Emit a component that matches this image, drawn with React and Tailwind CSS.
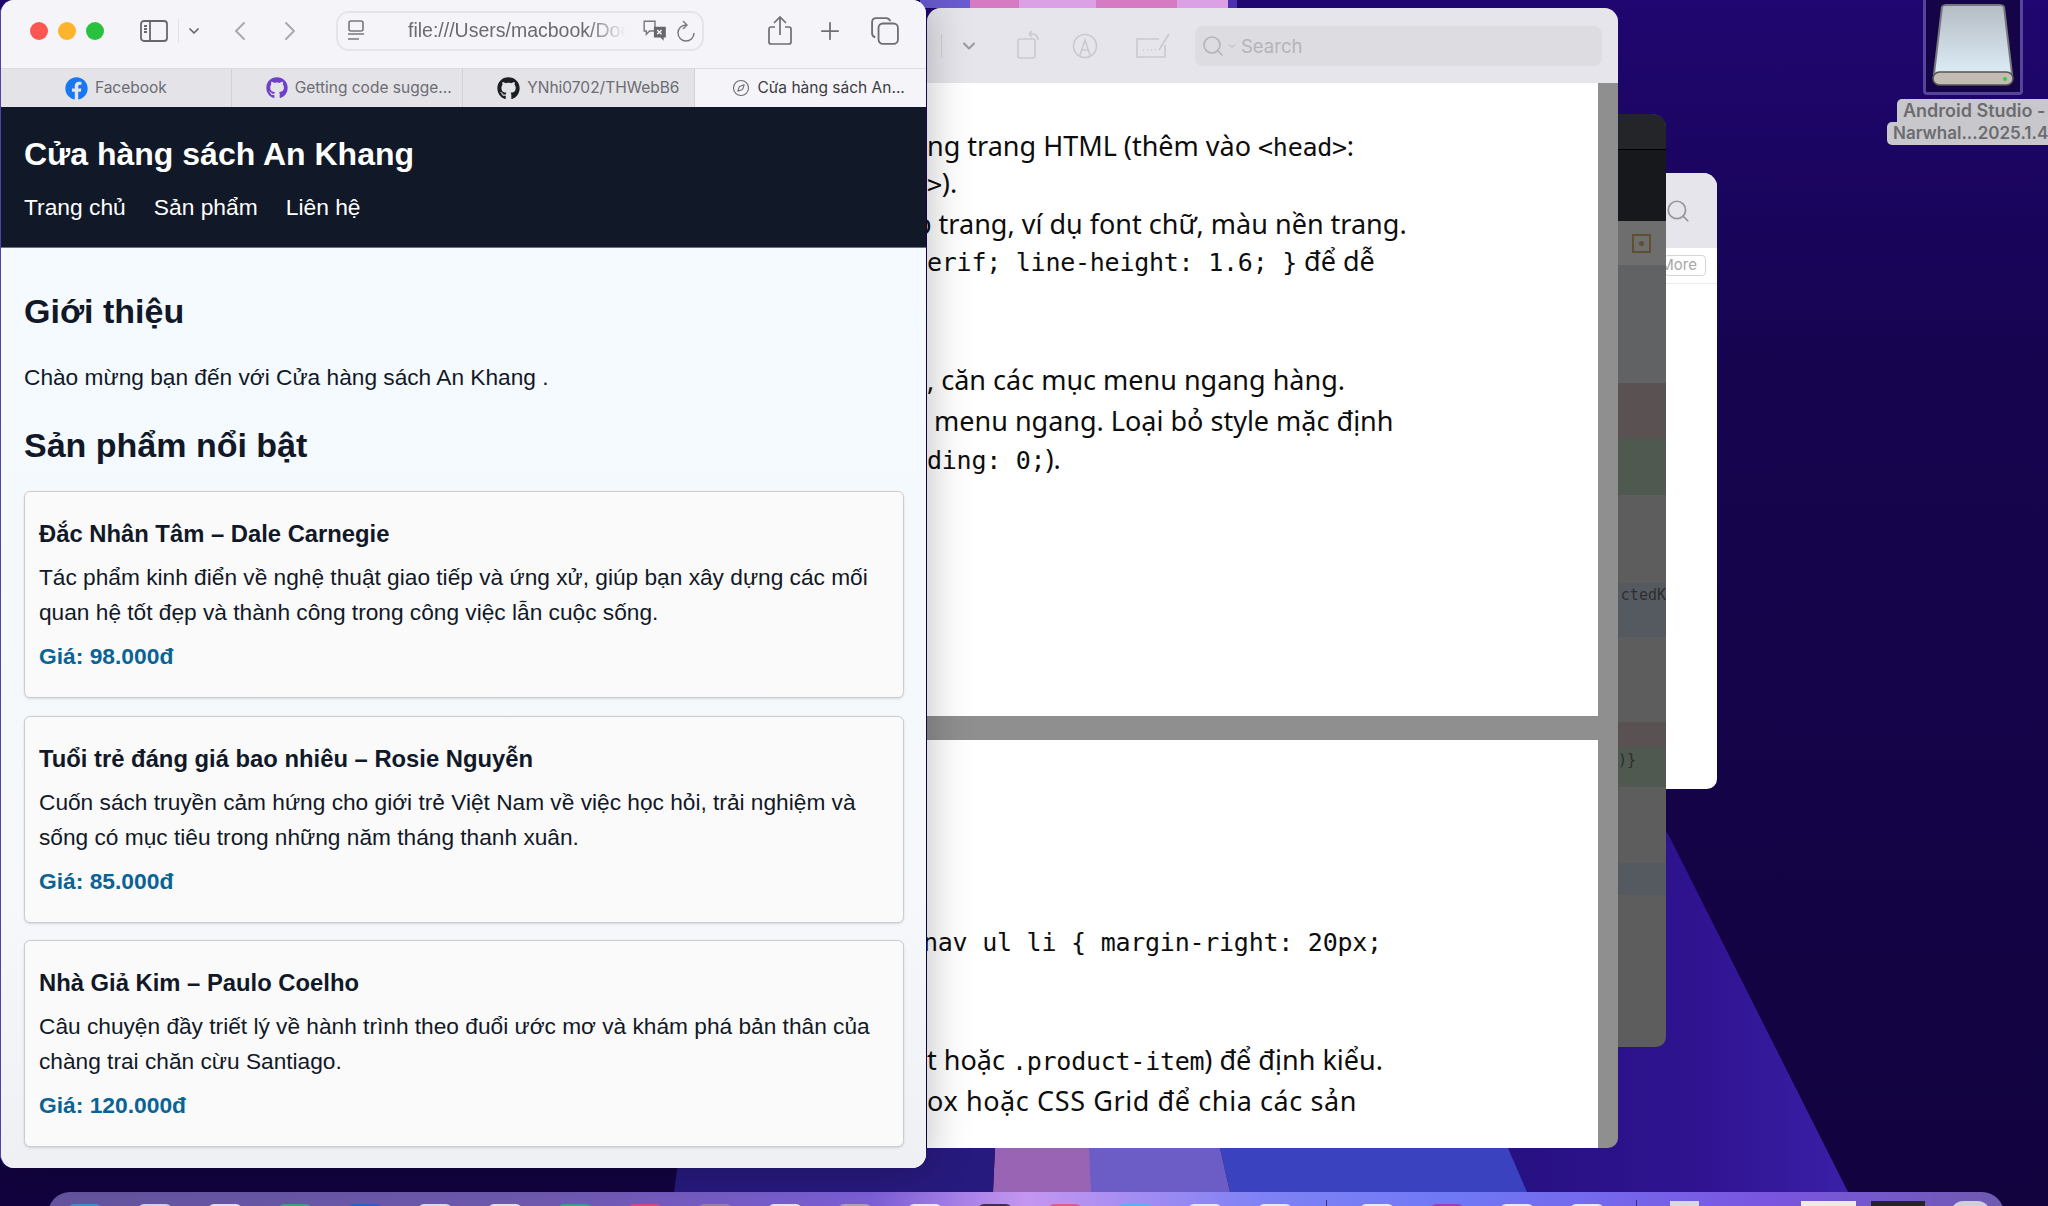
import { Compass, ChevronDown, ChevronLeft, ChevronRight, Plus, Search } from "lucide-react";
import { FaFacebook, FaGithub } from "react-icons/fa";

const books = [
    {
        title: "Đắc Nhân Tâm – Dale Carnegie",
        desc: "Tác phẩm kinh điển về nghệ thuật giao tiếp và ứng xử, giúp bạn xây dựng các mối quan hệ tốt đẹp và thành công trong công việc lẫn cuộc sống.",
        price: "Giá: 98.000đ",
    },
    {
        title: "Tuổi trẻ đáng giá bao nhiêu – Rosie Nguyễn",
        desc: "Cuốn sách truyền cảm hứng cho giới trẻ Việt Nam về việc học hỏi, trải nghiệm và sống có mục tiêu trong những năm tháng thanh xuân.",
        price: "Giá: 85.000đ",
    },
    {
        title: "Nhà Giả Kim – Paulo Coelho",
        desc: "Câu chuyện đầy triết lý về hành trình theo đuổi ước mơ và khám phá bản thân của chàng trai chăn cừu Santiago.",
        price: "Giá: 120.000đ",
    },
];

const dockLeft = ["bg-[#3f8fd0]", "bg-[#d8d4e8]", "bg-[#e6e2f2]", "bg-[#3f9f8a]", "bg-[#2f5fd0]", "bg-[#d8e0f0]", "bg-[#e6e2f2]", "bg-[#3f9f8a]", "bg-[#d84a80]", "bg-[#9a80a8]", "bg-[#e8e4f4]", "bg-[#b0a0b8]", "bg-[#ece8f6]", "bg-[#403050]", "bg-[#e05a90]", "bg-[#5ab0f0]", "bg-[#e8e8f8]", "bg-[#e8e8f8]"];
const dockMid = ["bg-[#e8e8f8]", "bg-[#a040b0]", "bg-[#e8e8f8]", "bg-[#e8e8f8]"];

function Wallpaper() {
    return (
        <svg className="absolute inset-0" width="2048" height="1206" viewBox="0 0 2048 1206">
            <defs>
                <linearGradient id="sky" x1="0" y1="0" x2="0" y2="1">
                    <stop offset="0" stopColor="#1f0670" />
                    <stop offset="0.3" stopColor="#16044f" />
                    <stop offset="1" stopColor="#12033f" />
                </linearGradient>
                <linearGradient id="wedge" x1="0" y1="0" x2="1" y2="0">
                    <stop offset="0" stopColor="#261080" />
                    <stop offset="0.6" stopColor="#2f1390" />
                    <stop offset="1" stopColor="#3a1fa8" />
                </linearGradient>
            </defs>
            <rect width="2048" height="1206" fill="url(#sky)" />
            <polygon points="1667,832 1848,1192 1500,1192 1480,1100" fill="url(#wedge)" />
            <polygon points="1490,1148 1508,1148 1527,1192 1230,1192 1220,1148" fill="#3a42c0" />
            <polygon points="1089,1148 1220,1148 1230,1192 1089,1192" fill="#6b5cc6" />
            <polygon points="995,1148 1089,1148 1091,1192 993,1192" fill="#9a64b5" />
            <polygon points="680,1148 995,1148 993,1192 674,1192" fill="#271a7e" />
            <rect x="920" y="0" width="50" height="8" fill="#6a5bd0" />
            <rect x="970" y="0" width="49" height="8" fill="#d67ac4" />
            <rect x="1019" y="0" width="77" height="8" fill="#dca0e4" />
            <rect x="1096" y="0" width="81" height="8" fill="#d67ac4" />
            <rect x="1177" y="0" width="51" height="8" fill="#dca0e4" />
            <rect x="1228" y="0" width="9" height="8" fill="#4a30b0" />
        </svg>
    );
}

function DockPeek({ color }) {
    return <div className={`w-[34px] h-[10px] mt-[12px] rounded-t-md shrink-0 ${color}`}></div>;
}

function Dock() {
    return (
        <div className="absolute left-[48px] top-[1192px] w-[1956px] h-[40px] rounded-t-[22px] flex pl-[20px] bg-[linear-gradient(90deg,#64559f_0%,#6f5ab0_25%,#7c5fd8_42%,#c496f0_50%,#7f82f5_62%,#6f78f5_72%,#7a55e0_88%,#6f5ab0_100%)]">
            <div className="flex gap-[36px]">
                {dockLeft.map((color, i) => <DockPeek key={i} color={color} />)}
            </div>
            <div className="w-px h-[14px] mt-[8px] ml-[34px] bg-[#3a2c80]"></div>
            <div className="flex gap-[36px] ml-[33px]">
                {dockMid.map((color, i) => <DockPeek key={i} color={color} />)}
            </div>
            <div className="w-px h-[14px] mt-[8px] ml-[32px] bg-[#3a2c80]"></div>
            <div className="w-[29px] h-[14px] mt-[9px] ml-[33px] bg-[#d8d8e0]"></div>
            <div className="w-[55px] h-[14px] mt-[9px] ml-[102px] bg-[#eeeae6]"></div>
            <div className="w-[54px] h-[14px] mt-[9px] ml-[15px] bg-[#24242a]"></div>
            <div className="w-[39px] h-[14px] mt-[9px] ml-[26px] rounded-t-xl bg-[#cfcfd8]"></div>
        </div>
    );
}

function BackWindow() {
    const sans = "font-['Noto_Sans',sans-serif] text-[27px] leading-[36px] text-[#0d0d0d] whitespace-pre h-[36px]";
    const mono = "font-['DejaVu_Sans_Mono',monospace] text-[25px] tracking-[-0.25px]";

    return (
        <div className="absolute left-[927px] top-[8px] w-[691px] h-[1140px] rounded-t-[14px] rounded-br-[10px] overflow-hidden flex flex-col bg-[#8f8f8f]">
            <div className="h-[75px] shrink-0 bg-[#e6e5eb] flex items-center">
                <div className="w-px h-[24px] ml-[14px] bg-[#d4d4d8]"></div>
                <ChevronDown className="ml-[17px] mr-[37px] text-[#9a9aa0]" size={20} strokeWidth={2.5} />
                <svg width="26" height="32" viewBox="0 0 26 32" fill="none" stroke="#c9c9ce" strokeWidth="1.6" className="mr-[30px]">
                    <rect x="2" y="9" width="17" height="19" rx="2" />
                    <path d="M13 4c5-1 9 1 9 6M13 4l3-3M13 4l3 3" />
                </svg>
                <svg width="26" height="26" viewBox="0 0 26 26" fill="none" stroke="#c9c9ce" strokeWidth="1.6" className="mr-[37px]">
                    <circle cx="13" cy="13" r="11.5" />
                    <path d="M8 22l5-15 5 15M10 17h6" />
                </svg>
                <svg width="36" height="28" viewBox="0 0 36 28" fill="none" stroke="#c9c9ce" strokeWidth="1.6" className="mr-[24px]">
                    <path d="M24 7H2v18h28V13M24 18l10-16" />
                    <path d="M8 18h1M12 18h1M16 18h1M20 18h1" />
                </svg>
                <div className="w-[407px] h-[40px] rounded-lg bg-[#dcdce1] flex items-center pl-[6px] gap-[1px] text-[#b4b4ba]">
                    <Search size={24} strokeWidth={1.6} />
                    <ChevronDown size={12} strokeWidth={2} />
                    <span className="ml-[2px] mt-[3px] font-['Inter',sans-serif] text-[18.5px]">Search</span>
                </div>
            </div>
            <div className="w-[671px] h-[633px] shrink-0 bg-white pt-[45px] overflow-hidden">
                <div className={sans}>ng trang HTML (thêm vào <span className={mono}>&lt;head&gt;</span>:</div>
                <div className={`${sans} mt-[1px]`}><span className={mono}>&gt;</span>).</div>
                <div className={`${sans} mt-[5px] ml-[-12px]`}>p trang, ví dụ font chữ, màu nền trang.</div>
                <div className={`${sans} mt-[1px]`}><span className={mono}>erif; line-height: 1.6; </span><span className={mono}>{"}"}</span> để dễ</div>
                <div className={`${sans} mt-[83px]`}>, căn các mục menu ngang hàng.</div>
                <div className={`${sans} mt-[5px]`}> menu ngang. Loại bỏ style mặc định</div>
                <div className={`${sans} mt-[2px]`}><span className={mono}>ding: 0;</span>).</div>
            </div>
            <div className="w-[671px] h-[24px] shrink-0"></div>
            <div className="w-[671px] grow bg-white pt-[183px] overflow-hidden">
                <div className={`${sans} ml-[-4px]`}><span className={mono}>nav ul li {"{"} margin-right: 20px;</span></div>
                <div className={`${sans} mt-[83px]`}>t hoặc <span className={mono}>.product-item</span>) để định kiểu.</div>
                <div className={`${sans} mt-[5px] tracking-[0.6px]`}>ox hoặc CSS Grid để chia các sản</div>
            </div>
        </div>
    );
}

function DarkWindow() {
    const code = "font-['DejaVu_Sans_Mono',monospace] text-[15px] text-[#2e2e2e] whitespace-pre";

    return (
        <div className="absolute left-[1560px] top-[114px] w-[106px] h-[933px] rounded-t-[14px] rounded-b-[10px] overflow-hidden flex flex-col items-end bg-[#5d5d5d]">
            <div className="w-full h-[36px] bg-[#242528] border-b border-black"></div>
            <div className="w-full h-[71px] bg-[#17181b]"></div>
            <div className="w-full h-[44px] bg-[#6e6e6e] flex items-center justify-end pr-[15px]">
                <div className="w-[19px] h-[19px] border-2 border-[#5e5030] flex items-center justify-center">
                    <div className="w-[5px] h-[5px] rounded-full bg-[#5e5030]"></div>
                </div>
            </div>
            <div className="w-full h-[118px] bg-[#606264]"></div>
            <div className="w-full h-[55px] bg-[#5a5252]"></div>
            <div className="w-full h-[57px] bg-[#4f5950]"></div>
            <div className="w-full h-[88px]"></div>
            <div className="w-full h-[54px] bg-[#555a60] flex justify-end pt-[1px]">
                <span className={code}>ctedK</span>
            </div>
            <div className="w-full h-[85px]"></div>
            <div className="w-full h-[25px] bg-[#5a5252]"></div>
            <div className="w-full h-[40px] bg-[#4f5950] pl-[58px]">
                <span className={code}>)}</span>
            </div>
            <div className="w-full h-[76px]"></div>
            <div className="w-full h-[32px] bg-[#555a60]"></div>
        </div>
    );
}

function WhiteWindow() {
    return (
        <div className="absolute left-[1600px] top-[173px] w-[117px] h-[616px] rounded-t-[14px] rounded-b-[10px] overflow-hidden bg-white">
            <div className="h-[75px] bg-[#e6e5eb] flex items-center justify-end pr-[26px]">
                <Search className="text-[#96969c]" size={26} strokeWidth={1.6} />
            </div>
            <div className="h-[36px] border-b border-[#ececec] flex items-center justify-end pr-[11px]">
                <div className="w-[42px] h-[21px] overflow-hidden border border-[#d5d5d5] rounded-[4px] flex justify-end items-center pr-[8px]">
                    <span className="font-['Inter',sans-serif] text-[15px] text-[#a8a8a8]">More</span>
                </div>
            </div>
        </div>
    );
}

function DriveIcon() {
    return (
        <div className="absolute left-[1887px] top-0 w-[161px] h-[146px]">
            <div className="ml-[36px] w-[100px] h-[95px] bg-[#150548] border-[3px] border-t-0 border-[#54459a] rounded-b-[4px] flex justify-center">
                <svg width="82" height="82" viewBox="0 0 82 82" className="mt-[4px]">
                    <defs>
                        <linearGradient id="drive" x1="0" y1="0" x2="0" y2="1">
                            <stop offset="0" stopColor="#b5bcc4" />
                            <stop offset="1" stopColor="#dcecf6" />
                        </linearGradient>
                    </defs>
                    <path d="M10 3Q11 1 14 1H68Q71 1 72 3L80 70H2Z" fill="url(#drive)" stroke="#77777c" strokeWidth="2" />
                    <rect x="1" y="68" width="80" height="13" rx="6.5" fill="#c4bcb2" stroke="#55555a" strokeWidth="1.5" />
                    <circle cx="73" cy="75" r="2" fill="#30d040" />
                </svg>
            </div>
            <div className="mt-[4px] flex flex-col items-end font-['Inter',sans-serif] leading-[23px] font-semibold text-[#6c6c70] whitespace-nowrap">
                <div className="w-[151px] pl-[6px] text-[18px] bg-[#c8c8cc] rounded-tl-[5px]">Android Studio -</div>
                <div className="w-[161px] pl-[6px] text-[17px] bg-[#c8c8cc] rounded-l-[5px]">Narwhal...2025.1.4</div>
            </div>
        </div>
    );
}

function Tab({ icon, label, active, width }) {
    return (
        <div className={`${width} h-full flex items-center justify-center gap-[7px] border-r border-[#d2d2d6] font-['Inter',sans-serif] text-[15.5px] whitespace-nowrap ${active ? "bg-[#f5f5f9] text-[#3c3c40] border-r-0" : "bg-[#e3e3e8] text-[#6c6c72]"}`}>
            {icon}
            <span>{label}</span>
        </div>
    );
}

function Safari() {
    return (
        <div className="absolute left-0 top-0 w-[926px] h-[1168px] rounded-[14px] overflow-hidden flex flex-col bg-[#f4f9fd] shadow-[0_0_45px_rgba(0,0,0,0.28)] border-l border-[#5240b0]">
            <div className="h-[68px] shrink-0 bg-[#f5f5f9] flex items-center pb-[7px]">
                <div className="flex gap-[10px] ml-[29px]">
                    <div className="w-[18px] h-[18px] rounded-full bg-[#fb5652]"></div>
                    <div className="w-[18px] h-[18px] rounded-full bg-[#fdb32c]"></div>
                    <div className="w-[18px] h-[18px] rounded-full bg-[#2ac13f]"></div>
                </div>
                <svg width="28" height="22" viewBox="0 0 28 22" fill="none" stroke="#66666b" strokeWidth="1.8" className="ml-[36px]">
                    <rect x="1" y="1" width="26" height="20" rx="3" />
                    <path d="M10 1v20M4 6h3M4 9h3M4 12h3" />
                </svg>
                <div className="w-px h-[24px] bg-[#e2e2e6] ml-[10px]"></div>
                <ChevronDown className="ml-[7px] text-[#66666b]" size={16} strokeWidth={2.6} />
                <ChevronLeft className="ml-[22px] text-[#a9a9ae]" size={32} strokeWidth={1.5} />
                <ChevronRight className="ml-[18px] text-[#a9a9ae]" size={32} strokeWidth={1.5} />
                <div className="ml-[30px] w-[368px] h-[40px] rounded-[13px] border-2 border-[#e4e4e9] flex items-center text-[#7c7c82]">
                    <svg width="18" height="22" viewBox="0 0 18 22" fill="none" stroke="#77777c" strokeWidth="1.6" className="ml-[9px]">
                        <rect x="2" y="1" width="14" height="10" rx="2" />
                        <path d="M1 14h16M1 19h11" />
                    </svg>
                    <div className="ml-[43px] w-[218px] shrink-0 overflow-hidden whitespace-nowrap font-['Liberation_Sans',sans-serif] text-[19.5px] text-[#6a6a70] [mask-image:linear-gradient(90deg,black_82%,transparent)]">
                        file:///Users/macbook/Doc
                    </div>
                    <svg width="26" height="24" viewBox="0 0 24 22" className="ml-[16px] shrink-0">
                        <path d="M2 2h10v9H7l-3 3v-3H2z" fill="none" stroke="#77777c" strokeWidth="1.3" />
                        <path d="M11 7h11v10h-2v3l-3-3h-6z" fill="#66666b" />
                        <path d="M14 10l4 4M18 10l-4 4" stroke="#f5f5f9" strokeWidth="1.4" />
                    </svg>
                    <svg width="20" height="22" viewBox="0 0 20 22" fill="none" stroke="#77777c" strokeWidth="1.4" className="ml-[8px] shrink-0">
                        <path d="M18 13A8 8 0 1 1 10 5M7 1l4 4-4 4" />
                    </svg>
                </div>
                <svg width="24" height="30" viewBox="0 0 24 30" fill="none" stroke="#6e6e73" strokeWidth="1.7" className="ml-[64px]">
                    <path d="M7 11H3a2 2 0 0 0-2 2v13a2 2 0 0 0 2 2h18a2 2 0 0 0 2-2V13a2 2 0 0 0-2-2h-4M12 19V2M6 7l6-6 6 6" />
                </svg>
                <Plus className="ml-[24px] text-[#6e6e73]" size={28} strokeWidth={1.5} />
                <svg width="28" height="28" viewBox="0 0 26 26" fill="none" stroke="#6e6e73" strokeWidth="1.7" className="ml-[27px]">
                    <rect x="7" y="6" width="18" height="19" rx="4" />
                    <path d="M4 19Q1 18 1 15V5q0-4 4-4h9q3 0 4 3" />
                </svg>
            </div>
            <div className="h-[39px] shrink-0 flex border-t border-[#dcdce0]">
                <Tab width="w-[231px]" label="Facebook" icon={<FaFacebook className="text-[#1877f2]" size={23} />} />
                <Tab width="w-[231px] pl-[24px]" label="Getting code sugge..." icon={<FaGithub className="text-[#6e40c9]" size={22} />} />
                <Tab width="w-[233px] pl-[20px]" label="YNhi0702/THWebB6" icon={<FaGithub className="text-[#1b1f24]" size={23} />} />
                <Tab width="w-[231px] pl-[16px]" active label="Cửa hàng sách An..." icon={<Compass className="text-[#6c6c72]" size={18} strokeWidth={1.5} />} />
            </div>
            <header className="h-[141px] shrink-0 bg-[#111827] border-b border-[#6b7280] pl-[23px] pt-[27px] text-white font-['Liberation_Sans',sans-serif]">
                <h1 className="text-[32px] leading-[40px] font-bold">Cửa hàng sách An Khang</h1>
                <nav className="mt-[19px] flex gap-[28px] text-[22.8px] leading-[28px]">
                    <span>Trang chủ</span>
                    <span>Sản phẩm</span>
                    <span>Liên hệ</span>
                </nav>
            </header>
            <main className="grow pl-[23px] pr-[22px] pt-[40px] text-[#111827] font-['Liberation_Sans',sans-serif] bg-[linear-gradient(180deg,#f4fafe,#f6f8fb_70%,#eef0f3)]">
                <h2 className="text-[34px] leading-[46px] font-bold">Giới thiệu</h2>
                <p className="mt-[28px] text-[22.7px] leading-[30px]">Chào mừng bạn đến với Cửa hàng sách An Khang .</p>
                <h2 className="mt-[30px] text-[34px] leading-[46px] font-bold">Sản phẩm nổi bật</h2>
                <div className="mt-[23px] flex flex-col gap-[17.5px]">
                    {books.map((b) => (
                        <div key={b.title} className="h-[207px] px-[14px] pt-[27px] rounded-[6px] border border-[#cbcdd1] bg-[#fafafa] shadow-sm">
                            <h3 className="text-[23.8px] leading-[30px] font-bold">{b.title}</h3>
                            <p className="mt-[11px] text-[22.7px] leading-[35px]">{b.desc}</p>
                            <p className="mt-[11px] text-[22.8px] leading-[30px] font-bold text-[#0a6394]">{b.price}</p>
                        </div>
                    ))}
                </div>
            </main>
        </div>
    );
}

export default function App() {
    return (
        <div className="relative w-[2048px] h-[1206px] overflow-hidden bg-[#14034c]">
            <Wallpaper />
            <DriveIcon />
            <Dock />
            <WhiteWindow />
            <DarkWindow />
            <BackWindow />
            <Safari />
        </div>
    );
}
